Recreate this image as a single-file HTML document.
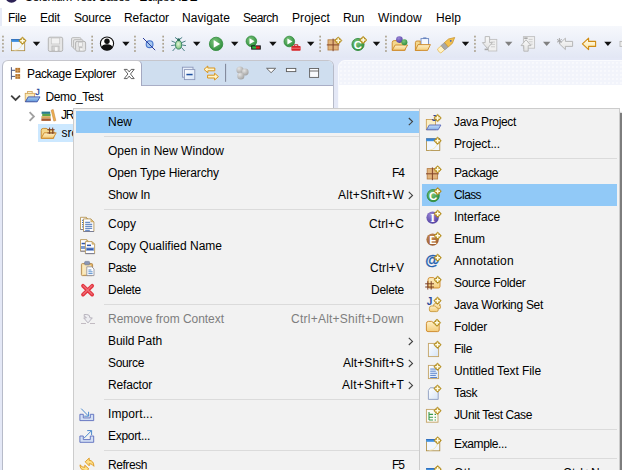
<!DOCTYPE html>
<html><head><meta charset="utf-8"><title>Eclipse IDE</title>
<style>
html,body{margin:0;padding:0;background:#fff;}
#root{position:relative;width:622px;height:470px;overflow:hidden;background:#fff;font-family:"Liberation Sans",sans-serif;font-size:12px;}
.t{position:absolute;white-space:pre;font-family:"Liberation Sans",sans-serif;}
.a{position:absolute;}
svg{position:absolute;overflow:visible;}
#toolbar{left:0;top:26px;width:622px;height:34px;background:linear-gradient(#f6f8fc 0%,#eef1f9 40%,#e1e6f4 100%);}
#below{left:0;top:58px;width:622px;height:412px;background:#e4e8f6;}
#pe{left:2px;top:60px;width:332px;height:420px;background:#fff;border:1px solid #b7bbc9;border-top-color:#c6c6cc;border-radius:6px 6px 0 0;box-sizing:border-box;overflow:hidden;}
#pehead{left:0;top:0;width:332px;height:24px;background:#cfdeef;border-bottom:1px solid #a9aec6;}
#petab{left:-1px;top:-1px;width:140px;height:26px;background:#fff;border:1px solid #a4a8c0;border-left-color:#b7bbc9;border-top-color:#c4c2c8;border-bottom:none;border-radius:6px 5px 0 0;box-sizing:border-box;}
#ed{left:338px;top:60px;width:300px;height:420px;background:#fff;border:1px solid #fafbfe;border-radius:7px 0 0 0;box-sizing:border-box;}
#edhead{left:339px;top:61px;width:290px;height:24px;border-radius:6px 0 0 0;background-color:#f2f4fb;background-image:radial-gradient(circle,rgba(255,255,255,0.9) 0.5px,rgba(255,255,255,0) 0.9px);background-size:4px 4px;}
#sel{left:38px;top:124px;width:40px;height:18px;background:#cce8ff;}
.menu{background:#f2f2f2;border:1px solid #cccccc;box-sizing:border-box;}
#cm{left:73px;top:108px;width:349px;height:380px;}
#sm{left:419px;top:108px;width:201px;height:380px;}
.hl{background:#91c9f7;}
.sep{height:1px;background:#dbdbdb;}

</style></head>
<body>
<div id="root">
<div class="a" style="left:0;top:8px;width:1.5px;height:20px;background:#e6eaf7;"></div>
<div class="a" id="toolbar"></div>
<div class="a" id="below"></div>
<div class="a" id="pe"><div class="a" id="pehead"></div><div class="a" id="petab"></div></div>
<div class="a" id="ed"></div><div class="a" id="edhead"></div>
<div class="a" id="sel"></div>
<svg width="622" height="470" viewBox="0 0 622 470" style="left:0;top:0"><defs>
<linearGradient id="gdoc" x1="0" y1="0" x2="1" y2="1"><stop offset="0" stop-color="#ffffff"/><stop offset="1" stop-color="#d6e4f6"/></linearGradient>
<linearGradient id="gfold" x1="0" y1="0" x2="0" y2="1"><stop offset="0" stop-color="#fdf0c8"/><stop offset="1" stop-color="#f4cd7a"/></linearGradient>
<linearGradient id="gclip" x1="0" y1="0" x2="1" y2="0"><stop offset="0" stop-color="#fbe6b0"/><stop offset="1" stop-color="#dfae5c"/></linearGradient>
<linearGradient id="gblue2" x1="0" y1="0" x2="0" y2="1"><stop offset="0" stop-color="#c4dcf8"/><stop offset="1" stop-color="#86b0e8"/></linearGradient>
<linearGradient id="gblue" x1="0" y1="0" x2="0" y2="1"><stop offset="0" stop-color="#a9cdf2"/><stop offset="1" stop-color="#5f96dc"/></linearGradient>
<radialGradient id="ggreen" cx="0.4" cy="0.35" r="0.7"><stop offset="0" stop-color="#7cc47c"/><stop offset="1" stop-color="#2c8c3a"/></radialGradient>
<linearGradient id="garrow" x1="0" y1="0" x2="0" y2="1"><stop offset="0" stop-color="#fffef4"/><stop offset="1" stop-color="#fde6a0"/></linearGradient>
<linearGradient id="ggray" x1="0" y1="0" x2="0" y2="1"><stop offset="0" stop-color="#fafafa"/><stop offset="1" stop-color="#e2e2e2"/></linearGradient>
<radialGradient id="gball" cx="0.35" cy="0.3" r="0.8"><stop offset="0" stop-color="#e4e4e4"/><stop offset="1" stop-color="#9c9c9c"/></radialGradient>
<radialGradient id="gbrown" cx="0.4" cy="0.3" r="0.8"><stop offset="0" stop-color="#c48a54"/><stop offset="1" stop-color="#98582c"/></radialGradient>
<radialGradient id="gbug" cx="0.45" cy="0.4" r="0.7"><stop offset="0" stop-color="#e4f6d8"/><stop offset="1" stop-color="#6cba6a"/></radialGradient>
<radialGradient id="gpurple" cx="0.4" cy="0.3" r="0.8"><stop offset="0" stop-color="#9a86d6"/><stop offset="1" stop-color="#4a3a9c"/></radialGradient>
</defs><circle cx="11.5" cy="-3.5" r="6.2" fill="#2c2255"/><rect x="2.1" y="35.7" width="1.7" height="1.8" fill="#aca390"/><rect x="2.1" y="39.3" width="1.7" height="1.8" fill="#aca390"/><rect x="2.1" y="42.9" width="1.7" height="1.8" fill="#aca390"/><rect x="2.1" y="46.5" width="1.7" height="1.8" fill="#aca390"/><rect x="2.1" y="50.1" width="1.7" height="1.8" fill="#aca390"/><rect x="11.5" y="39.5" width="13.2" height="11.2" fill="#f1f7fe" stroke="#ab8838" stroke-width="0.8"/><rect x="11.3" y="39.2" width="13.6" height="2.7" fill="#3d8fe0"/><rect x="11.3" y="39.2" width="13.6" height="0.9" fill="#2f6ec0"/><path d="M14.5,50.300000000000004 Q21.3,49.7 22.3,42.9" stroke="#f6e3a8" stroke-width="1" fill="none" opacity="0.8"/><g transform="translate(22.5,40.8)"><path d="M0,-3.7 L1.9980000000000002,-1.9980000000000002 L3.7,0 L1.9980000000000002,1.9980000000000002 L0,3.7 L-1.9980000000000002,1.9980000000000002 L-3.7,0 L-1.9980000000000002,-1.9980000000000002Z" fill="#b8901e" stroke="#b08a1e" stroke-width="0.5" stroke-linejoin="round"/><path d="M0,-2.294V2.294M-2.294,0H2.294" stroke="#fffbe2" stroke-width="1.5" fill="none"/></g><path d="M32.8,41.8 h7.4 l-3.7,4.2z" fill="#111"/><rect x="48.3" y="37.2" width="14.4" height="14.2" rx="1.6" fill="#e6e6e6" stroke="#b4b4b4" stroke-width="1"/><rect x="51.3" y="38.0" width="8.4" height="5.9639999999999995" fill="#f2f2f2" stroke="#c4c4c4" stroke-width="0.7"/><rect x="51.9" y="46.004000000000005" width="7.2" height="4.796" fill="#d2d2d2" stroke="#b8b8b8" stroke-width="0.7"/><rect x="55.0" y="47.14" width="2.6" height="3.6599999999999997" fill="#f6f6f6"/><rect x="71.5" y="37.6" width="9.6" height="9.6" rx="1.4" fill="#e6e6e6" stroke="#b8b8b8" stroke-width="0.9"/><rect x="73.5" y="39.6" width="9.6" height="9.6" rx="1.4" fill="#e6e6e6" stroke="#b8b8b8" stroke-width="0.9"/><rect x="75.6" y="41.4" width="10" height="9.8" rx="1.6" fill="#e6e6e6" stroke="#b4b4b4" stroke-width="1"/><rect x="78.6" y="42.199999999999996" width="4" height="4.1160000000000005" fill="#f2f2f2" stroke="#c4c4c4" stroke-width="0.7"/><rect x="79.19999999999999" y="47.476" width="2.8" height="3.124" fill="#d2d2d2" stroke="#b8b8b8" stroke-width="0.7"/><rect x="80.1" y="48.26" width="2.6" height="2.34" fill="#f6f6f6"/><rect x="91.3" y="35.7" width="1.7" height="1.8" fill="#aca390"/><rect x="91.3" y="39.3" width="1.7" height="1.8" fill="#aca390"/><rect x="91.3" y="42.9" width="1.7" height="1.8" fill="#aca390"/><rect x="91.3" y="46.5" width="1.7" height="1.8" fill="#aca390"/><rect x="91.3" y="50.1" width="1.7" height="1.8" fill="#aca390"/><circle cx="107" cy="43.6" r="6.6" fill="#fff" stroke="#111" stroke-width="1.1"/><circle cx="107" cy="41.3" r="2.7" fill="#111"/><path d="M101.4,47.4 q0.8,-3.2 5.6,-3.2 q4.8,0 5.6,3.2 q-2,2.9 -5.6,2.9 q-3.6,0 -5.6,-2.9z" fill="#111"/><path d="M122.2,41.8 h7.4 l-3.7,4.2z" fill="#111"/><rect x="134.1" y="35.7" width="1.7" height="1.8" fill="#aca390"/><rect x="134.1" y="39.3" width="1.7" height="1.8" fill="#aca390"/><rect x="134.1" y="42.9" width="1.7" height="1.8" fill="#aca390"/><rect x="134.1" y="46.5" width="1.7" height="1.8" fill="#aca390"/><rect x="134.1" y="50.1" width="1.7" height="1.8" fill="#aca390"/><circle cx="149.6" cy="44.2" r="3.4" fill="#a6c8f0" stroke="#4674cc" stroke-width="1.1"/><path d="M143,38 L155.2,50.2" stroke="#2b3b9a" stroke-width="1"/><rect x="162.29999999999998" y="35.7" width="1.7" height="1.8" fill="#aca390"/><rect x="162.29999999999998" y="39.3" width="1.7" height="1.8" fill="#aca390"/><rect x="162.29999999999998" y="42.9" width="1.7" height="1.8" fill="#aca390"/><rect x="162.29999999999998" y="46.5" width="1.7" height="1.8" fill="#aca390"/><rect x="162.29999999999998" y="50.1" width="1.7" height="1.8" fill="#aca390"/><g stroke="#24646a" stroke-width="0.8" fill="none"><path d="M178.6,40 L175,37.4 M178.6,40 L182.2,37.4 M175.4,42.6 L171.6,41 M181.8,42.6 L185.6,41 M175,45 L171.2,45.6 M182.2,45 L186,45.6 M175.6,47.6 L172.6,51 M181.6,47.6 L184.6,51"/></g><ellipse cx="178.6" cy="44.8" rx="3.1" ry="4.3" fill="url(#gbug)" stroke="#2a7a5a" stroke-width="0.9"/><circle cx="178.6" cy="39.8" r="1.5" fill="#2a6a5a"/><path d="M193,41.8 h7.4 l-3.7,4.2z" fill="#111"/><circle cx="216.1" cy="43.9" r="6.7" fill="url(#ggreen)" stroke="#2f8a3a" stroke-width="0.8"/><path d="M213.688,40.013999999999996 L220.12,43.9 L213.688,47.786z" fill="#fff"/><path d="M231,41.8 h7.4 l-3.7,4.2z" fill="#111"/><circle cx="251.4" cy="41.3" r="5.3" fill="url(#ggreen)" stroke="#2f8a3a" stroke-width="0.8"/><path d="M249.49200000000002,38.226 L254.58,41.3 L249.49200000000002,44.373999999999995z" fill="#fff"/><rect x="251.2" y="45.4" width="9.6" height="4.2" fill="#111"/><rect x="252.2" y="46.3" width="3.8" height="2.4" fill="#2cb83c"/><rect x="256" y="46.3" width="3.8" height="2.4" fill="#e02020"/><path d="M269.2,41.8 h7.4 l-3.7,4.2z" fill="#111"/><circle cx="289.3" cy="41.5" r="5.3" fill="url(#ggreen)" stroke="#2f8a3a" stroke-width="0.8"/><path d="M287.392,38.426 L292.48,41.5 L287.392,44.574z" fill="#fff"/><rect x="291.4" y="46" width="9.2" height="4.8" rx="0.8" fill="#d8262a"/><path d="M294.2,46 v-1.2 h3.6 v1.2" stroke="#c01c20" stroke-width="1" fill="none"/><rect x="291.4" y="47.8" width="9.2" height="0.8" fill="#f08a8a"/><path d="M307,41.8 h7.4 l-3.7,4.2z" fill="#111"/><rect x="319.3" y="35.7" width="1.7" height="1.8" fill="#aca390"/><rect x="319.3" y="39.3" width="1.7" height="1.8" fill="#aca390"/><rect x="319.3" y="42.9" width="1.7" height="1.8" fill="#aca390"/><rect x="319.3" y="46.5" width="1.7" height="1.8" fill="#aca390"/><rect x="319.3" y="50.1" width="1.7" height="1.8" fill="#aca390"/><rect x="328.0" y="39.800000000000004" width="10.200000000000001" height="10.200000000000001" fill="#e2b47c" stroke="#b88048" stroke-width="0.9"/><path d="M333.09999999999997,38.6V51.2M326.79999999999995,44.900000000000006H339.4" stroke="#84452a" stroke-width="1" fill="none"/><g transform="translate(338.2,40.6)"><path d="M0,-3.7 L1.9980000000000002,-1.9980000000000002 L3.7,0 L1.9980000000000002,1.9980000000000002 L0,3.7 L-1.9980000000000002,1.9980000000000002 L-3.7,0 L-1.9980000000000002,-1.9980000000000002Z" fill="#b8901e" stroke="#b08a1e" stroke-width="0.5" stroke-linejoin="round"/><path d="M0,-2.294V2.294M-2.294,0H2.294" stroke="#fffbe2" stroke-width="1.5" fill="none"/></g><circle cx="358" cy="44.5" r="6.1" fill="url(#ggreen)" stroke="#2f8a3a" stroke-width="0.8"/><text x="358" y="48.6" text-anchor="middle" font-family="Liberation Sans" font-weight="bold" font-size="11.5" fill="#fff">C</text><g transform="translate(363.2,40)"><path d="M0,-3.7 L1.9980000000000002,-1.9980000000000002 L3.7,0 L1.9980000000000002,1.9980000000000002 L0,3.7 L-1.9980000000000002,1.9980000000000002 L-3.7,0 L-1.9980000000000002,-1.9980000000000002Z" fill="#b8901e" stroke="#b08a1e" stroke-width="0.5" stroke-linejoin="round"/><path d="M0,-2.294V2.294M-2.294,0H2.294" stroke="#fffbe2" stroke-width="1.5" fill="none"/></g><path d="M372.8,41.8 h7.4 l-3.7,4.2z" fill="#111"/><rect x="385.1" y="35.7" width="1.7" height="1.8" fill="#aca390"/><rect x="385.1" y="39.3" width="1.7" height="1.8" fill="#aca390"/><rect x="385.1" y="42.9" width="1.7" height="1.8" fill="#aca390"/><rect x="385.1" y="46.5" width="1.7" height="1.8" fill="#aca390"/><rect x="385.1" y="50.1" width="1.7" height="1.8" fill="#aca390"/><path d="M392.2,42.6 q0,-2 2,-2 h3 q1.2,0 1.8,1.5 h4.5 q1.6,0 1.6,1.6 v6.6000000000000005 h-12.9z" fill="#f3d88e" stroke="#cc8624" stroke-width="0.9"/><path d="M395.2,45.0 h12.4 l-3,5.200000000000001 h-12.4z" fill="url(#gfold)" stroke="#cc8624" stroke-width="0.9" stroke-linejoin="round"/><circle cx="399.4" cy="39.6" r="3.3" fill="url(#gpurple)"/><circle cx="404.4" cy="42.2" r="3" fill="url(#ggreen)"/><rect x="421" y="38.6" width="7.6" height="7" fill="#f4f8ff" stroke="#6a86c0" stroke-width="0.9"/><rect x="423.2" y="37.4" width="3.2" height="1.6" fill="#6a86c0"/><path d="M415.4,42.6 q0,-1.6 1.6,-1.6 h3.2 v9.4 h-4.8z" fill="#f3d88e" stroke="#cc8624" stroke-width="0.9"/><path d="M418,44.6 h12.4 l-2.8,5.8 h-12.2z" fill="url(#gfold)" stroke="#cc8624" stroke-width="0.9" stroke-linejoin="round"/><g transform="translate(447,44.2) rotate(-41)"><path d="M-10.4,-2.6 h5 v5.2 h-5 q-1.4,-2.6 0,-5.2z" fill="#fff3c8" stroke="#e8b84c" stroke-width="0.7"/><rect x="-5.4" y="-2.9" width="4.6" height="5.8" fill="#a8a8a8" stroke="#8a8a8a" stroke-width="0.5"/><path d="M-0.8,-2.9 h5.4 l5.6,2.9 l-5.6,2.9 h-5.4z" fill="#f2c050" stroke="#c8922a" stroke-width="0.7"/><circle cx="5" cy="0" r="0.9" fill="#3a62c0"/></g><path d="M461.8,41.8 h7.4 l-3.7,4.2z" fill="#111"/><rect x="474.1" y="35.7" width="1.7" height="1.8" fill="#aca390"/><rect x="474.1" y="39.3" width="1.7" height="1.8" fill="#aca390"/><rect x="474.1" y="42.9" width="1.7" height="1.8" fill="#aca390"/><rect x="474.1" y="46.5" width="1.7" height="1.8" fill="#aca390"/><rect x="474.1" y="50.1" width="1.7" height="1.8" fill="#aca390"/><rect x="488.4" y="39.4" width="8.4" height="11.6" fill="#f0f0f0" stroke="#c0c0c0" stroke-width="0.9"/><path d="M491,42h4M491,44.4h4M491,46.8h4" stroke="#c8c8c8" stroke-width="0.9"/><path d="M485.2,36.6 h4.4 v6 h2.8 l-5,5.8 l-5,-5.8 h2.8z" fill="url(#ggray)" stroke="#b4b4b4" stroke-width="0.9" stroke-linejoin="round"/><rect x="484.6" y="48.6" width="3.4" height="1.6" fill="#a8a8a8"/><path d="M505,41.8 h7.4 l-3.7,4.2z" fill="#808080"/><rect x="523.4" y="36.6" width="11.2" height="11.6" fill="#f0f0f0" stroke="#c0c0c0" stroke-width="0.9"/><path d="M528.6,39.4h4M528.6,41.8h4M528.6,44.2h4" stroke="#c8c8c8" stroke-width="0.9"/><rect x="524.2" y="37.4" width="3.4" height="1.6" fill="#a8a8a8"/><path d="M523.8,51.2 h4.4 v-5.6 h2.8 l-5,-5.8 l-5,5.8 h2.8z" fill="url(#ggray)" stroke="#b4b4b4" stroke-width="0.9" stroke-linejoin="round"/><path d="M543,41.8 h7.4 l-3.7,4.2z" fill="#808080"/><path d="M559.4,43.8 l6,-5.6 v3.2 h7.2 v5 h-7.2 v3.2z" fill="url(#ggray)" stroke="#b0b0b0" stroke-width="0.9" stroke-linejoin="round"/><path d="M559.4,38v5.6M557,39.4l4.8,2.8M561.8,39.4l-4.8,2.8" stroke="#a0a0a0" stroke-width="0.9"/><path d="M582.4,43.8 l6.2,-5.6 v3.2 h7 v5 h-7 v3.2z" fill="url(#garrow)" stroke="#d08c12" stroke-width="1.1" stroke-linejoin="round"/><path d="M604.2,41.8 h7.4 l-3.7,4.2z" fill="#111"/><rect x="620" y="41.4" width="6" height="5" fill="#eeeeee" stroke="#b8b8b8" stroke-width="0.9"/><path d="M11.4,67.2V79.6M11.4,70.3H15.4M11.4,76.4H15.4" stroke="#4a5680" stroke-width="1" fill="none"/><rect x="15.4" y="67.9" width="4.7" height="4.7" fill="#b4722c"/><path d="M17.75,67.9v4.7M15.4,70.25h4.7" stroke="#e8b878" stroke-width="0.6"/><rect x="15.4" y="74.1" width="4.7" height="4.7" fill="#b4722c"/><path d="M17.75,74.1v4.7M15.4,76.44999999999999h4.7" stroke="#e8b878" stroke-width="0.6"/><path d="M124.2,69.4 h3 l2,2.5 l2,-2.5 h3 l-3.7,4.6 l3.7,4.6 h-3 l-2,-2.5 l-2,2.5 h-3 l3.7,-4.6z" fill="#fff" stroke="#505050" stroke-width="0.9" stroke-linejoin="round"/><rect x="182.4" y="67.2" width="10.6" height="10" fill="#e6eefa" stroke="#8c98ba" stroke-width="0.9"/><rect x="184.4" y="69.6" width="10.4" height="10" fill="url(#gdoc)" stroke="#8c98ba" stroke-width="0.9"/><rect x="186.4" y="73.8" width="6.2" height="1.5" fill="#1d4fa0"/><path d="M204,69.4 l3.8,-3.4 v2 h7 v2.8 h-7 v2z" fill="#fff4c8" stroke="#d8941c" stroke-width="1" stroke-linejoin="round"/><path d="M218.4,76.6 l-3.8,-3.4 v2 h-7 v2.8 h7 v2z" fill="#fff4c8" stroke="#d8941c" stroke-width="1" stroke-linejoin="round"/><rect x="225.1" y="63.8" width="1" height="18" fill="#7c8294"/><circle cx="240" cy="70" r="3.6" fill="url(#gball)"/><circle cx="245.2" cy="72" r="3.4" fill="url(#gball)"/><circle cx="240.8" cy="76" r="3.6" fill="url(#gball)"/><path d="M266.6,68.3 h9 l-4.5,4.4z" fill="#fff" stroke="#5c5c5c" stroke-width="0.9" stroke-linejoin="miter"/><rect x="286.4" y="68.4" width="9.4" height="3.2" fill="#fff" stroke="#5c5c5c" stroke-width="0.9"/><rect x="309.6" y="68.5" width="9" height="8.9" fill="#f8fafd" stroke="#606060" stroke-width="0.9"/><path d="M309.6,71h9" stroke="#606060" stroke-width="0.9"/><path d="M11.2,95.6 l4.4,4.4 l4.4,-4.4" stroke="#404040" stroke-width="1.8" fill="none"/><rect x="27.6" y="91.4" width="4.6" height="2.6" fill="#fdf6dc" stroke="#d0a050" stroke-width="0.8"/><rect x="25.2" y="93.3" width="9.2" height="8.2" fill="#fbeab8" stroke="#d0a050" stroke-width="0.8"/><path d="M28.2,96.9 h11.8 l-2.8,4.9 h-11.8z" fill="url(#gblue)" stroke="#3a50a8" stroke-width="0.9" stroke-linejoin="round"/><text x="35.2" y="95.4" font-family="Liberation Sans" font-size="9" fill="#2a4a9a" stroke="#2a4a9a" stroke-width="0.3">J</text><path d="M29.6,112.2 l4.3,4.3 l-4.3,4.3" stroke="#a0a0a0" stroke-width="1.8" fill="none"/><rect x="41.6" y="111.6" width="8.6" height="2.3" fill="#2a7a8c"/><rect x="42.2" y="113.9" width="8.4" height="2.3" fill="#5aa44a"/><rect x="41.4" y="116.2" width="9.2" height="2.3" fill="#d8a858"/><rect x="41.4" y="118.5" width="9.4" height="2.4" fill="#a85a30"/><path d="M51.2,110.2 l2,-0.7 l2.6,11 l-2,0.6z" fill="#eeb050" stroke="#c8843c" stroke-width="0.6"/><path d="M41.2,130.4 q0,-2 2,-2 h3 q1.2,0 1.8,1.5 h4.1 q1.6,0 1.6,1.6 v6.8 h-12.5z" fill="#f3d88e" stroke="#cc8624" stroke-width="0.9"/><path d="M44.2,132.8 h12 l-3,5.4 h-12z" fill="url(#gfold)" stroke="#cc8624" stroke-width="0.9" stroke-linejoin="round"/><path d="M47.4,129.7h7.2M47.4,133h7.2M49.6,127.6v6.2M52.7,127.6v6.2" stroke="#7c4226" stroke-width="1" fill="none"/></svg>
<span class="t" style="left:61px;top:107px;color:#000;font-size:12px;line-height:16px;letter-spacing:-1.336px;">JR</span>
<span class="t" style="left:61.5px;top:125px;color:#000;font-size:12px;line-height:16px;letter-spacing:0.000px;">src</span>
<div class="a" style="left:424px;top:113px;width:198px;height:380px;background:#7d7d7d;box-shadow:0 0 2px #7d7d7d;"></div>
<div class="a menu" id="cm"></div>
<div class="a hl" style="left:76px;top:111px;width:343px;height:22px;"></div>
<div class="a sep" style="left:104px;top:136px;width:315px;"></div>
<div class="a sep" style="left:104px;top:209px;width:315px;"></div>
<div class="a sep" style="left:104px;top:304px;width:315px;"></div>
<div class="a sep" style="left:104px;top:399px;width:315px;"></div>
<div class="a sep" style="left:104px;top:450px;width:315px;"></div>
<div class="a menu" id="sm"></div>
<div class="a hl" style="left:422px;top:184px;width:195px;height:22px;"></div>
<div class="a sep" style="left:450px;top:158px;width:167px;"></div>
<div class="a sep" style="left:450px;top:429px;width:167px;"></div>
<div class="a sep" style="left:450px;top:458px;width:167px;"></div>
<svg width="622" height="470" viewBox="0 0 622 470" style="left:0;top:0"><path d="M80.5,217.3 h5.800000000000001 l2.6,2.6 v9.6 h-8.4z" fill="#fdfdff" stroke="#b8985a" stroke-width="0.9" stroke-linejoin="round"/><path d="M86.30000000000001,217.3 v2.6 h2.6z" fill="#ecc97c" stroke="#b8985a" stroke-width="0.6" stroke-linejoin="round"/><path d="M80.5,229.5 h8.4" stroke="#70789a" stroke-width="0.9"/><path d="M82,220.3h2M82,222.5h2M82,224.70000000000002h2M82,226.9h2" stroke="#3a6ab4" stroke-width="1"/><path d="M83.5,218.9 h7.4 l3,3 v9.6 h-10.4z" fill="#fdfdff" stroke="#b8985a" stroke-width="0.9" stroke-linejoin="round"/><path d="M90.9,218.9 v3 h3z" fill="#ecc97c" stroke="#b8985a" stroke-width="0.6" stroke-linejoin="round"/><path d="M83.5,231.5 h10.4" stroke="#70789a" stroke-width="0.9"/><path d="M85.2,222.3h5M85.2,224.3h7M85.2,226.3h7M85.2,228.3h7M85.2,230.3h4.6" stroke="#3a6ab4" stroke-width="0.95"/><path d="M80.5,239.6 h6.199999999999999 l2.4,2.4 v9.2 h-8.6z" fill="#fdfdff" stroke="#b8985a" stroke-width="0.9" stroke-linejoin="round"/><path d="M86.69999999999999,239.6 v2.4 h2.4z" fill="#ecc97c" stroke="#b8985a" stroke-width="0.6" stroke-linejoin="round"/><path d="M80.5,251.2 h8.6" stroke="#70789a" stroke-width="0.9"/><rect x="81.6" y="242.79999999999998" width="5" height="1.5" fill="#2f55a8"/><rect x="81" y="246.0" width="5" height="3" fill="#7a9ad0"/><path d="M85.4,241.6 h6.6 l2.6,2.6 v9.4 h-9.2z" fill="#fdfdff" stroke="#b8985a" stroke-width="0.9" stroke-linejoin="round"/><path d="M92.00000000000001,241.6 v2.6 h2.6z" fill="#ecc97c" stroke="#b8985a" stroke-width="0.6" stroke-linejoin="round"/><path d="M85.4,253.6 h9.2" stroke="#70789a" stroke-width="0.9"/><rect x="87" y="244.6" width="4" height="1.5" fill="#2f55a8"/><rect x="86" y="247.6" width="8" height="3.2" fill="#7a9ad0"/><rect x="87" y="248.5" width="6" height="1.4" fill="#2f55a8"/><rect x="81.4" y="263.59999999999997" width="11.2" height="12" rx="1" fill="url(#gclip)" stroke="#b08448" stroke-width="0.9"/><rect x="83" y="265.2" width="8" height="9" fill="#fbf0d0" opacity="0.7"/><rect x="84.6" y="261.4" width="5" height="3.4" rx="1" fill="#8a96b4" stroke="#6a7694" stroke-width="0.6"/><path d="M86.8,266.79999999999995 h5 l2.2,2.2 v6.6 h-7.2z" fill="#fdfdff" stroke="#8a8a96" stroke-width="0.8" stroke-linejoin="round"/><path d="M88.4,270.0h3M88.4,271.79999999999995h4.2M88.4,273.59999999999997h4.2" stroke="#4a86c8" stroke-width="0.9"/><path d="M83,285.8 L92.2,294.6 M92.2,285.8 L83,294.6" stroke="#e2343e" stroke-width="3.7" stroke-linecap="round"/><path d="M83.2,285.8 L92,294.2 M92,285.8 L83.2,294.2" stroke="#ee6a74" stroke-width="1.3" stroke-linecap="round"/><path d="M84.2,314.5 h2.6 q3.2,0 3.2,3.4 h2.3 l-4.3,5 l-4.3,-5 h2.6 q0,-1.3 -2.1,-1.3z" fill="#ededf1" stroke="#b2aeb8" stroke-width="0.9" stroke-linejoin="round"/><path d="M81,323.5h5M90,323.5h5" stroke="#bcb4bc" stroke-width="0.9"/><path d="M79.9,414.3 h3.4 v3.6 h7 v-3.6 h3.4 v6.3 h-13.8z" fill="#d4e0f4" stroke="#5a6cbc" stroke-width="0.9"/><path d="M81.2,408.6 l7,7.2 m0.4,-4 v4.4 h-4.4" stroke="#4584cc" stroke-width="0.95" fill="none"/><path d="M79.9,436 h3.4 v3.6 h7 v-3.6 h3.4 v6.3 h-13.8z" fill="#d4e0f4" stroke="#5a6cbc" stroke-width="0.9"/><path d="M84,438.2 l7.4,-7.4 m-4.2,-0.2 h4.4 v4.4" stroke="#4584cc" stroke-width="0.95" fill="none"/><path d="M85.2,461.8 l4,-3.7 v2.2 q4.6,0.4 4.7,6 q-1.7,-2.7 -4.7,-2.7 v2.2z" fill="#fde08a" stroke="#dc9418" stroke-width="0.9" stroke-linejoin="round"/><path d="M80,464.8 q0,5.2 4.8,5.6 v2.2 l4,-3.7 l-4,-3.7 v2.2 q-3,0 -4.8,-2.6z" fill="#fde08a" stroke="#dc9418" stroke-width="0.9" stroke-linejoin="round"/><path d="M408.8,118.0 l3.7,3.6 l-3.7,3.6" stroke="#404040" stroke-width="1.1" fill="none"/><path d="M408.8,191.8 l3.7,3.6 l-3.7,3.6" stroke="#404040" stroke-width="1.1" fill="none"/><path d="M408.8,337.79999999999995 l3.7,3.6 l-3.7,3.6" stroke="#404040" stroke-width="1.1" fill="none"/><path d="M408.8,359.79999999999995 l3.7,3.6 l-3.7,3.6" stroke="#404040" stroke-width="1.1" fill="none"/><path d="M408.8,381.79999999999995 l3.7,3.6 l-3.7,3.6" stroke="#404040" stroke-width="1.1" fill="none"/><rect x="426.3" y="119.5" width="9.2" height="10.2" fill="#fbefc6" stroke="#c89a48" stroke-width="0.8"/><path d="M429.3,125 h11.6 l-2.8,4.8 h-11.6z" fill="url(#gblue2)" stroke="#5a6ab8" stroke-width="0.9" stroke-linejoin="round"/><text x="431.4" y="121" font-family="Liberation Sans" font-size="9" fill="#2a4a9a" font-weight="bold">J</text><g transform="translate(437.6,118)"><path d="M0,-3.7 L1.9980000000000002,-1.9980000000000002 L3.7,0 L1.9980000000000002,1.9980000000000002 L0,3.7 L-1.9980000000000002,1.9980000000000002 L-3.7,0 L-1.9980000000000002,-1.9980000000000002Z" fill="#b8901e" stroke="#b08a1e" stroke-width="0.5" stroke-linejoin="round"/><path d="M0,-2.294V2.294M-2.294,0H2.294" stroke="#fffbe2" stroke-width="1.5" fill="none"/></g><rect x="426.4" y="138.8" width="13.4" height="11.6" fill="#f1f7fe" stroke="#ab8838" stroke-width="0.8"/><rect x="426.2" y="138.5" width="13.8" height="2.7" fill="#3d8fe0"/><rect x="426.2" y="138.5" width="13.8" height="0.9" fill="#2f6ec0"/><path d="M429.4,150.0 Q436.4,149.4 437.4,142.20000000000002" stroke="#f6e3a8" stroke-width="1" fill="none" opacity="0.8"/><g transform="translate(437.6,140.8)"><path d="M0,-3.7 L1.9980000000000002,-1.9980000000000002 L3.7,0 L1.9980000000000002,1.9980000000000002 L0,3.7 L-1.9980000000000002,1.9980000000000002 L-3.7,0 L-1.9980000000000002,-1.9980000000000002Z" fill="#b8901e" stroke="#b08a1e" stroke-width="0.5" stroke-linejoin="round"/><path d="M0,-2.294V2.294M-2.294,0H2.294" stroke="#fffbe2" stroke-width="1.5" fill="none"/></g><rect x="427.20000000000005" y="168.6" width="10.4" height="10.4" fill="#e2b47c" stroke="#b88048" stroke-width="0.9"/><path d="M432.40000000000003,167.4V180.2M426.0,173.8H438.80000000000007" stroke="#84452a" stroke-width="1" fill="none"/><g transform="translate(437.7,169.4)"><path d="M0,-3.7 L1.9980000000000002,-1.9980000000000002 L3.7,0 L1.9980000000000002,1.9980000000000002 L0,3.7 L-1.9980000000000002,1.9980000000000002 L-3.7,0 L-1.9980000000000002,-1.9980000000000002Z" fill="#b8901e" stroke="#b08a1e" stroke-width="0.5" stroke-linejoin="round"/><path d="M0,-2.294V2.294M-2.294,0H2.294" stroke="#fffbe2" stroke-width="1.5" fill="none"/></g><circle cx="433.2" cy="195.6" r="6.1" fill="url(#ggreen)" stroke="#2f8a3a" stroke-width="0.8"/><text x="433.2" y="199.7" text-anchor="middle" font-family="Liberation Sans" font-weight="bold" font-size="11.5" fill="#fff">C</text><g transform="translate(437.7,191.2)"><path d="M0,-3.7 L1.9980000000000002,-1.9980000000000002 L3.7,0 L1.9980000000000002,1.9980000000000002 L0,3.7 L-1.9980000000000002,1.9980000000000002 L-3.7,0 L-1.9980000000000002,-1.9980000000000002Z" fill="#b8901e" stroke="#b08a1e" stroke-width="0.5" stroke-linejoin="round"/><path d="M0,-2.294V2.294M-2.294,0H2.294" stroke="#fffbe2" stroke-width="1.5" fill="none"/></g><circle cx="432.6" cy="217.6" r="6.2" fill="url(#gpurple)"/><text x="432.6" y="221.79999999999998" text-anchor="middle" font-family="Liberation Serif" font-weight="bold" font-size="12.5" fill="#fff">I</text><g transform="translate(437.7,213.8)"><path d="M0,-3.7 L1.9980000000000002,-1.9980000000000002 L3.7,0 L1.9980000000000002,1.9980000000000002 L0,3.7 L-1.9980000000000002,1.9980000000000002 L-3.7,0 L-1.9980000000000002,-1.9980000000000002Z" fill="#b8901e" stroke="#b08a1e" stroke-width="0.5" stroke-linejoin="round"/><path d="M0,-2.294V2.294M-2.294,0H2.294" stroke="#fffbe2" stroke-width="1.5" fill="none"/></g><circle cx="432.6" cy="239.6" r="6.2" fill="url(#gbrown)"/><text x="432.90000000000003" y="243.5" text-anchor="middle" font-family="Liberation Sans" font-weight="bold" font-size="11" fill="#fff">E</text><g transform="translate(437.7,235.8)"><path d="M0,-3.7 L1.9980000000000002,-1.9980000000000002 L3.7,0 L1.9980000000000002,1.9980000000000002 L0,3.7 L-1.9980000000000002,1.9980000000000002 L-3.7,0 L-1.9980000000000002,-1.9980000000000002Z" fill="#b8901e" stroke="#b08a1e" stroke-width="0.5" stroke-linejoin="round"/><path d="M0,-2.294V2.294M-2.294,0H2.294" stroke="#fffbe2" stroke-width="1.5" fill="none"/></g><text x="432.4" y="265.4" text-anchor="middle" font-family="Liberation Sans" font-size="14.5" fill="#2462b0" font-weight="bold" stroke="#2462b0" stroke-width="0.3">@</text><g transform="translate(437.7,257.7)"><path d="M0,-3.7 L1.9980000000000002,-1.9980000000000002 L3.7,0 L1.9980000000000002,1.9980000000000002 L0,3.7 L-1.9980000000000002,1.9980000000000002 L-3.7,0 L-1.9980000000000002,-1.9980000000000002Z" fill="#b8901e" stroke="#b08a1e" stroke-width="0.5" stroke-linejoin="round"/><path d="M0,-2.294V2.294M-2.294,0H2.294" stroke="#fffbe2" stroke-width="1.5" fill="none"/></g><path d="M428,279.8 q0,-2.2 2,-2.2 h3.2 q1.2,0 1.8,1.6 h3.4000000000000004 q1.6,0 1.6,1.6 v5.6 q0,1.6 -1.6,1.6 h-8.8 q-1.6,0 -1.6,-1.6z" fill="url(#gfold)" stroke="#cc8624" stroke-width="0.9"/><path d="M425.2,283.8h8.8M425.2,287h8.8M427.8,281.2v8.4M431.2,281.2v8.4" stroke="#7c4226" stroke-width="1" fill="none"/><g transform="translate(437.7,279.8)"><path d="M0,-3.7 L1.9980000000000002,-1.9980000000000002 L3.7,0 L1.9980000000000002,1.9980000000000002 L0,3.7 L-1.9980000000000002,1.9980000000000002 L-3.7,0 L-1.9980000000000002,-1.9980000000000002Z" fill="#b8901e" stroke="#b08a1e" stroke-width="0.5" stroke-linejoin="round"/><path d="M0,-2.294V2.294M-2.294,0H2.294" stroke="#fffbe2" stroke-width="1.5" fill="none"/></g><text x="426.8" y="305" font-family="Liberation Sans" font-size="10" fill="#2a4a9a" font-weight="bold">J</text><path d="M433.4,305.8 q0,-2.2 2,-2.2 h3.2 q1.2,0 1.8,1.6 h-1.3999999999999995 q1.6,0 1.6,1.6 v0.40000000000000036 q0,1.6 -1.6,1.6 h-4.0 q-1.6,0 -1.6,-1.6z" fill="url(#gfold)" stroke="#c89a40" stroke-width="0.9"/><path d="M429.4,308.2 q0,-2.2 2,-2.2 h3.2 q1.2,0 1.8,1.6 h0.20000000000000107 q1.6,0 1.6,1.6 v0.8000000000000007 q0,1.6 -1.6,1.6 h-5.6000000000000005 q-1.6,0 -1.6,-1.6z" fill="url(#gfold)" stroke="#c89a40" stroke-width="0.9"/><g transform="translate(437.5,300.7)"><path d="M0,-3.7 L1.9980000000000002,-1.9980000000000002 L3.7,0 L1.9980000000000002,1.9980000000000002 L0,3.7 L-1.9980000000000002,1.9980000000000002 L-3.7,0 L-1.9980000000000002,-1.9980000000000002Z" fill="#b8901e" stroke="#b08a1e" stroke-width="0.5" stroke-linejoin="round"/><path d="M0,-2.294V2.294M-2.294,0H2.294" stroke="#fffbe2" stroke-width="1.5" fill="none"/></g><path d="M426.4,323.59999999999997 q0,-2.2 2,-2.2 h3.2 q1.2,0 1.8,1.6 h4.200000000000001 q1.6,0 1.6,1.6 v5.4 q0,1.6 -1.6,1.6 h-9.600000000000001 q-1.6,0 -1.6,-1.6z" fill="url(#gfold)" stroke="#cc8624" stroke-width="0.9"/><g transform="translate(437,322.7)"><path d="M0,-3.7 L1.9980000000000002,-1.9980000000000002 L3.7,0 L1.9980000000000002,1.9980000000000002 L0,3.7 L-1.9980000000000002,1.9980000000000002 L-3.7,0 L-1.9980000000000002,-1.9980000000000002Z" fill="#b8901e" stroke="#b08a1e" stroke-width="0.5" stroke-linejoin="round"/><path d="M0,-2.294V2.294M-2.294,0H2.294" stroke="#fffbe2" stroke-width="1.5" fill="none"/></g><rect x="428.4" y="343.4" width="10.2" height="13.2" fill="url(#gdoc)" stroke="#c4a466" stroke-width="0.9"/><g transform="translate(437.5,344.8)"><path d="M0,-3.7 L1.9980000000000002,-1.9980000000000002 L3.7,0 L1.9980000000000002,1.9980000000000002 L0,3.7 L-1.9980000000000002,1.9980000000000002 L-3.7,0 L-1.9980000000000002,-1.9980000000000002Z" fill="#b8901e" stroke="#b08a1e" stroke-width="0.5" stroke-linejoin="round"/><path d="M0,-2.294V2.294M-2.294,0H2.294" stroke="#fffbe2" stroke-width="1.5" fill="none"/></g><rect x="428.4" y="365.4" width="10.2" height="13.2" fill="url(#gdoc)" stroke="#c4a466" stroke-width="0.9"/><rect x="430.2" y="368.6" width="6.8" height="0.9" fill="#4a78c8"/><rect x="430.2" y="370.7" width="5.6" height="0.9" fill="#4a78c8"/><rect x="430.2" y="372.8" width="6.8" height="0.9" fill="#4a78c8"/><rect x="430.2" y="374.9" width="5.6" height="0.9" fill="#4a78c8"/><rect x="430.2" y="377.0" width="6.8" height="0.9" fill="#4a78c8"/><g transform="translate(437.5,366.8)"><path d="M0,-3.7 L1.9980000000000002,-1.9980000000000002 L3.7,0 L1.9980000000000002,1.9980000000000002 L0,3.7 L-1.9980000000000002,1.9980000000000002 L-3.7,0 L-1.9980000000000002,-1.9980000000000002Z" fill="#b8901e" stroke="#b08a1e" stroke-width="0.5" stroke-linejoin="round"/><path d="M0,-2.294V2.294M-2.294,0H2.294" stroke="#fffbe2" stroke-width="1.5" fill="none"/></g><path d="M428.4,390.4 l1.8,-2.6 h7 l1,2.6 v9 h-9.8z" fill="url(#gdoc)" stroke="#8c9cc0" stroke-width="0.9"/><g transform="translate(437.5,388.6)"><path d="M0,-3.7 L1.9980000000000002,-1.9980000000000002 L3.7,0 L1.9980000000000002,1.9980000000000002 L0,3.7 L-1.9980000000000002,1.9980000000000002 L-3.7,0 L-1.9980000000000002,-1.9980000000000002Z" fill="#b8901e" stroke="#b08a1e" stroke-width="0.5" stroke-linejoin="round"/><path d="M0,-2.294V2.294M-2.294,0H2.294" stroke="#fffbe2" stroke-width="1.5" fill="none"/></g><rect x="426.4" y="409.4" width="11.6" height="12.8" fill="#fbfbf6" stroke="#c4a466" stroke-width="0.9"/><path d="M429,412v8M429,414.4h4M429,417.2h4M429,420h4" stroke="#3c9a4c" stroke-width="1.1" fill="none"/><path d="M434.6,414.4h1.4M434.6,417.2h1.4M434.6,420h1.4" stroke="#3c9a4c" stroke-width="1.1"/><g transform="translate(437.5,410.8)"><path d="M0,-3.7 L1.9980000000000002,-1.9980000000000002 L3.7,0 L1.9980000000000002,1.9980000000000002 L0,3.7 L-1.9980000000000002,1.9980000000000002 L-3.7,0 L-1.9980000000000002,-1.9980000000000002Z" fill="#b8901e" stroke="#b08a1e" stroke-width="0.5" stroke-linejoin="round"/><path d="M0,-2.294V2.294M-2.294,0H2.294" stroke="#fffbe2" stroke-width="1.5" fill="none"/></g><rect x="426.4" y="439.4" width="13.4" height="11.4" fill="#f1f7fe" stroke="#ab8838" stroke-width="0.8"/><rect x="426.2" y="439.09999999999997" width="13.8" height="2.7" fill="#3d8fe0"/><rect x="426.2" y="439.09999999999997" width="13.8" height="0.9" fill="#2f6ec0"/><path d="M429.4,450.4 Q436.4,449.79999999999995 437.4,442.79999999999995" stroke="#f6e3a8" stroke-width="1" fill="none" opacity="0.8"/><g transform="translate(437.7,440.4)"><path d="M0,-3.7 L1.9980000000000002,-1.9980000000000002 L3.7,0 L1.9980000000000002,1.9980000000000002 L0,3.7 L-1.9980000000000002,1.9980000000000002 L-3.7,0 L-1.9980000000000002,-1.9980000000000002Z" fill="#b8901e" stroke="#b08a1e" stroke-width="0.5" stroke-linejoin="round"/><path d="M0,-2.294V2.294M-2.294,0H2.294" stroke="#fffbe2" stroke-width="1.5" fill="none"/></g><rect x="426.4" y="468.4" width="13.4" height="11.4" fill="#f1f7fe" stroke="#ab8838" stroke-width="0.8"/><rect x="426.2" y="468.09999999999997" width="13.8" height="2.7" fill="#3d8fe0"/><rect x="426.2" y="468.09999999999997" width="13.8" height="0.9" fill="#2f6ec0"/><path d="M429.4,479.4 Q436.4,478.79999999999995 437.4,471.79999999999995" stroke="#f6e3a8" stroke-width="1" fill="none" opacity="0.8"/><g transform="translate(437.7,469.2)"><path d="M0,-3.7 L1.9980000000000002,-1.9980000000000002 L3.7,0 L1.9980000000000002,1.9980000000000002 L0,3.7 L-1.9980000000000002,1.9980000000000002 L-3.7,0 L-1.9980000000000002,-1.9980000000000002Z" fill="#b8901e" stroke="#b08a1e" stroke-width="0.5" stroke-linejoin="round"/><path d="M0,-2.294V2.294M-2.294,0H2.294" stroke="#fffbe2" stroke-width="1.5" fill="none"/></g></svg>
<span class="t" style="left:25px;top:-10px;color:#000;font-size:12px;line-height:14px;letter-spacing:-0.400px;">Selenium Test Cases - Eclipse IDE</span>
<span class="t" style="left:8px;top:10px;color:#000;font-size:12px;line-height:16px;letter-spacing:-0.336px;">File</span>
<span class="t" style="left:40px;top:10px;color:#000;font-size:12px;line-height:16px;letter-spacing:-0.172px;">Edit</span>
<span class="t" style="left:74px;top:10px;color:#000;font-size:12px;line-height:16px;letter-spacing:-0.172px;">Source</span>
<span class="t" style="left:124px;top:10px;color:#000;font-size:12px;line-height:16px;letter-spacing:-0.045px;">Refactor</span>
<span class="t" style="left:182px;top:10px;color:#000;font-size:12px;line-height:16px;letter-spacing:0.078px;">Navigate</span>
<span class="t" style="left:243px;top:10px;color:#000;font-size:12px;line-height:16px;letter-spacing:-0.505px;">Search</span>
<span class="t" style="left:292px;top:10px;color:#000;font-size:12px;line-height:16px;letter-spacing:0.092px;">Project</span>
<span class="t" style="left:343px;top:10px;color:#000;font-size:12px;line-height:16px;letter-spacing:-0.339px;">Run</span>
<span class="t" style="left:378px;top:10px;color:#000;font-size:12px;line-height:16px;letter-spacing:0.219px;">Window</span>
<span class="t" style="left:436px;top:10px;color:#000;font-size:12px;line-height:16px;letter-spacing:0.078px;">Help</span>
<span class="t" style="left:27px;top:66px;color:#000;font-size:12px;line-height:16px;letter-spacing:-0.357px;">Package Explorer</span>
<span class="t" style="left:45.4px;top:89px;color:#000;font-size:12px;line-height:16px;letter-spacing:-0.345px;">Demo_Test</span>
<span class="t" style="left:108px;top:114px;color:#000;font-size:12px;line-height:16px;letter-spacing:-0.005px;">New</span>
<span class="t" style="left:108px;top:143px;color:#000;font-size:12px;line-height:16px;letter-spacing:0.034px;">Open in New Window</span>
<span class="t" style="left:108px;top:165px;color:#000;font-size:12px;line-height:16px;letter-spacing:-0.114px;">Open Type Hierarchy</span>
<span class="t" style="left:392px;top:165px;color:#000;font-size:12px;line-height:16px;letter-spacing:-1.008px;">F4</span>
<span class="t" style="left:108px;top:187px;color:#000;font-size:12px;line-height:16px;letter-spacing:-0.194px;">Show In</span>
<span class="t" style="left:338px;top:187px;color:#000;font-size:12px;line-height:16px;letter-spacing:0.240px;">Alt+Shift+W</span>
<span class="t" style="left:108px;top:216px;color:#000;font-size:12px;line-height:16px;letter-spacing:-0.004px;">Copy</span>
<span class="t" style="left:369px;top:216px;color:#000;font-size:12px;line-height:16px;letter-spacing:0.109px;">Ctrl+C</span>
<span class="t" style="left:108px;top:238px;color:#000;font-size:12px;line-height:16px;letter-spacing:-0.003px;">Copy Qualified Name</span>
<span class="t" style="left:108px;top:260px;color:#000;font-size:12px;line-height:16px;letter-spacing:-0.537px;">Paste</span>
<span class="t" style="left:370px;top:260px;color:#000;font-size:12px;line-height:16px;letter-spacing:0.052px;">Ctrl+V</span>
<span class="t" style="left:108px;top:282px;color:#000;font-size:12px;line-height:16px;letter-spacing:-0.281px;">Delete</span>
<span class="t" style="left:371px;top:282px;color:#000;font-size:12px;line-height:16px;letter-spacing:-0.281px;">Delete</span>
<span class="t" style="left:108px;top:311px;color:#7e7e7e;font-size:12px;line-height:16px;letter-spacing:-0.038px;">Remove from Context</span>
<span class="t" style="left:291px;top:311px;color:#7e7e7e;font-size:12px;line-height:16px;letter-spacing:0.243px;">Ctrl+Alt+Shift+Down</span>
<span class="t" style="left:108px;top:333px;color:#000;font-size:12px;line-height:16px;letter-spacing:-0.070px;">Build Path</span>
<span class="t" style="left:108px;top:355px;color:#000;font-size:12px;line-height:16px;letter-spacing:-0.339px;">Source</span>
<span class="t" style="left:343px;top:355px;color:#000;font-size:12px;line-height:16px;letter-spacing:0.087px;">Alt+Shift+S</span>
<span class="t" style="left:108px;top:377px;color:#000;font-size:12px;line-height:16px;letter-spacing:-0.170px;">Refactor</span>
<span class="t" style="left:342px;top:377px;color:#000;font-size:12px;line-height:16px;letter-spacing:0.239px;">Alt+Shift+T</span>
<span class="t" style="left:108px;top:406px;color:#000;font-size:12px;line-height:16px;letter-spacing:0.109px;">Import...</span>
<span class="t" style="left:108px;top:428px;color:#000;font-size:12px;line-height:16px;letter-spacing:-0.299px;">Export...</span>
<span class="t" style="left:108px;top:457px;color:#000;font-size:12px;line-height:16px;letter-spacing:-0.433px;">Refresh</span>
<span class="t" style="left:392px;top:457px;color:#000;font-size:12px;line-height:16px;letter-spacing:-1.008px;">F5</span>
<span class="t" style="left:454px;top:114px;color:#000;font-size:12px;line-height:16px;letter-spacing:-0.336px;">Java Project</span>
<span class="t" style="left:454px;top:136px;color:#000;font-size:12px;line-height:16px;letter-spacing:-0.136px;">Project...</span>
<span class="t" style="left:454px;top:165px;color:#000;font-size:12px;line-height:16px;letter-spacing:-0.386px;">Package</span>
<span class="t" style="left:454px;top:187px;color:#000;font-size:12px;line-height:16px;letter-spacing:-0.603px;">Class</span>
<span class="t" style="left:454px;top:209px;color:#000;font-size:12px;line-height:16px;letter-spacing:-0.078px;">Interface</span>
<span class="t" style="left:454px;top:231px;color:#000;font-size:12px;line-height:16px;letter-spacing:-0.090px;">Enum</span>
<span class="t" style="left:454px;top:253px;color:#000;font-size:12px;line-height:16px;letter-spacing:0.261px;">Annotation</span>
<span class="t" style="left:454px;top:275px;color:#000;font-size:12px;line-height:16px;letter-spacing:-0.298px;">Source Folder</span>
<span class="t" style="left:454px;top:297px;color:#000;font-size:12px;line-height:16px;letter-spacing:-0.302px;">Java Working Set</span>
<span class="t" style="left:454px;top:319px;color:#000;font-size:12px;line-height:16px;letter-spacing:-0.169px;">Folder</span>
<span class="t" style="left:454px;top:341px;color:#000;font-size:12px;line-height:16px;letter-spacing:-0.336px;">File</span>
<span class="t" style="left:454px;top:363px;color:#000;font-size:12px;line-height:16px;letter-spacing:-0.082px;">Untitled Text File</span>
<span class="t" style="left:454px;top:385px;color:#000;font-size:12px;line-height:16px;letter-spacing:-0.422px;">Task</span>
<span class="t" style="left:454px;top:407px;color:#000;font-size:12px;line-height:16px;letter-spacing:-0.388px;">JUnit Test Case</span>
<span class="t" style="left:454px;top:436px;color:#000;font-size:12px;line-height:16px;letter-spacing:-0.370px;">Example...</span>
<span class="t" style="left:454px;top:465px;color:#000;font-size:12px;line-height:16px;letter-spacing:0.455px;">Other...</span>
<span class="t" style="left:563px;top:465px;color:#000;font-size:12px;line-height:16px;letter-spacing:0.443px;">Ctrl+N</span>

</div>
</body></html>
